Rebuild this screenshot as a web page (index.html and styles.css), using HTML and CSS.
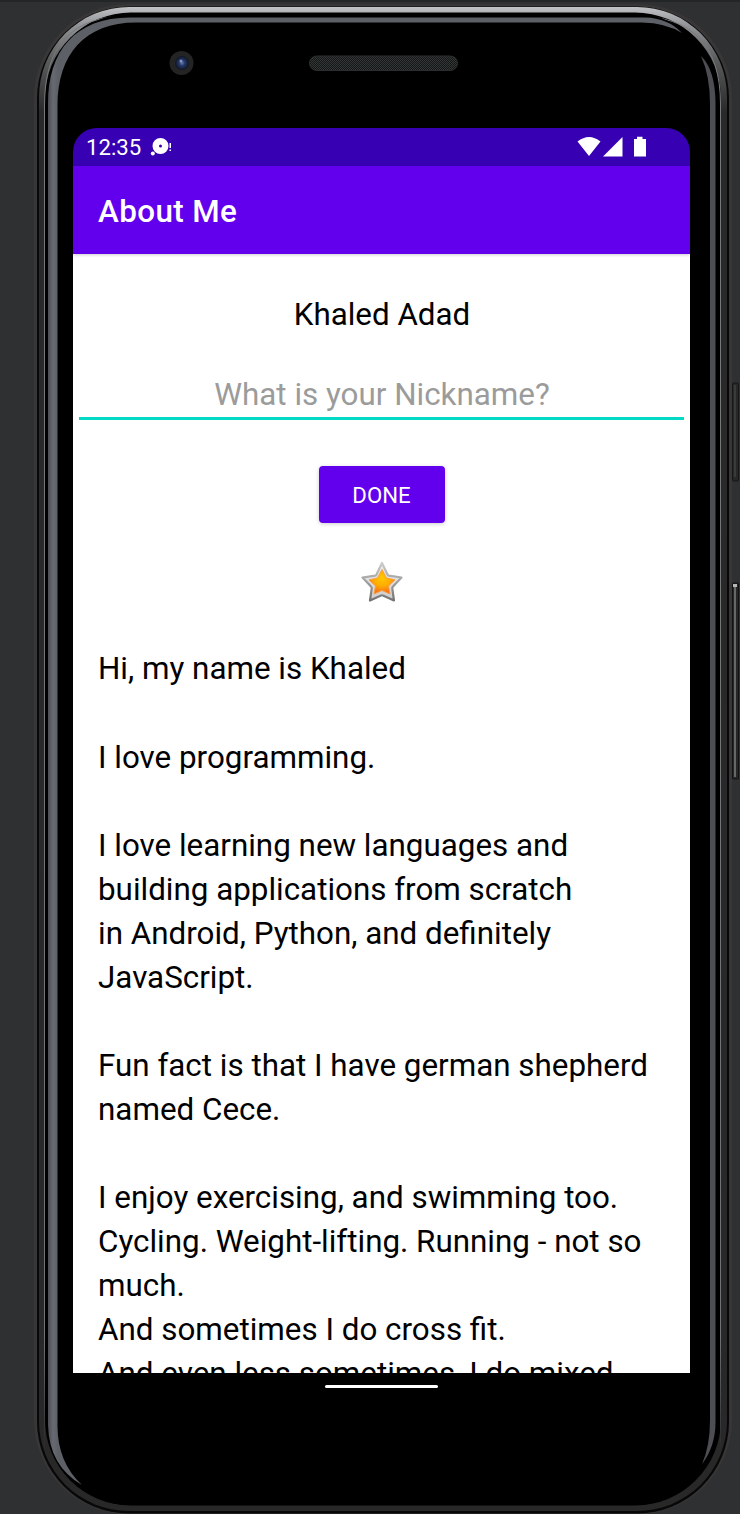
FILE: index.html
```html
<!DOCTYPE html>
<html lang="en">
<head>
<meta charset="utf-8">
<title>About Me</title>
<link rel="stylesheet" href="styles.css">
</head>
<body>
<svg class="frame" viewBox="0 0 740 1514" width="740" height="1514" aria-hidden="true">
  <defs>
    <linearGradient id="rim" x1="0" y1="0" x2="0" y2="1">
      <stop offset="0" stop-color="#c0c2c5"/><stop offset=".012" stop-color="#929497"/><stop offset=".035" stop-color="#5b5c5d"/><stop offset=".07" stop-color="#292929"/><stop offset="1" stop-color="#282829"/>
    </linearGradient>
    <linearGradient id="glass" gradientUnits="userSpaceOnUse" x1="48" y1="0" x2="58" y2="0">
      <stop offset="0" stop-color="#4b4c54"/><stop offset=".5" stop-color="#686a73"/><stop offset="1" stop-color="#5e6067"/>
    </linearGradient>
    <linearGradient id="line" x1="0" y1="0" x2="0" y2="1"><stop offset="0" stop-color="#77797b"/><stop offset=".92" stop-color="#707274"/><stop offset="1" stop-color="#282829"/></linearGradient>
    <radialGradient id="lens"><stop offset="0" stop-color="#637bae"/><stop offset=".4" stop-color="#26386a"/><stop offset="1" stop-color="#101522"/></radialGradient>
    <pattern id="mesh" width="2" height="2" patternUnits="userSpaceOnUse"><path fill="#151616" d="M0 0h2v2H0z"/><path fill="#343737" d="M0 0h1v1H0zM1 1h1v1H1z"/></pattern>
  </defs>
  <path fill="#242526" d="M0 0h740v2H0z"/>
  <rect x="34" y="4" width="698" height="1510" rx="94" fill="#383636"/>
  <rect x="37" y="6.500" width="692" height="1507" rx="92" fill="#080808"/>
  <rect x="39" y="7" width="688" height="1504" rx="90" fill="url(#rim)"/>
  <rect x="45" y="12.500" width="676" height="1493" rx="86" fill="#000"/>
  <path d="M44.500 1450V105Q44.500 16 128 16H635Q720.500 16 720.500 104V1450" fill="none" stroke="url(#line)" stroke-width="1"/>
  <rect x="46" y="14" width="673" height="1491" rx="84" fill="#000"/>
  <path fill="url(#glass)" d="M48 1425V104C48 51 75 17.500 130 17.500H645Q668 18 682 33Q666 23 642 22.500H136C85 22.500 57.500 54 57.500 106V1424Q57 1462 82 1485Q49 1466 48 1425Z"/>
  <path fill="#4d4e54" d="M701 56Q715.500 70 715.500 104V1420Q716 1446 702 1464Q710 1446 710 1420V104Q710 76 701 56Z"/>
  <circle cx="181.500" cy="63" r="12" fill="#242424"/>
  <circle cx="182" cy="63" r="7" fill="url(#lens)"/>
  <circle cx="181" cy="61" r="1.500" fill="#8195bd"/>
  <rect x="309.500" y="56" width="148" height="14.500" rx="7.250" fill="url(#mesh)" stroke="#2c2e2e"/>
  <rect x="732.500" y="383" width="6" height="98" rx="1" fill="#262727" stroke="#171717"/>
  <path fill="#393a3a" d="M734 385h2v92h-2z"/>
  <rect x="732.500" y="583" width="6" height="196" rx="1" fill="#262727" stroke="#121212"/>
  <path fill="#666868" d="M734 584h2v193h-2z"/><path fill="#b5b7b7" d="M733 584h4v3h-4z"/>
</svg>
<main class="device">
  <section class="screen">
    <div class="status">
      <span class="clock">12:35</span>
      <svg class="notice" viewBox="0 0 22 20" width="22" height="20"><path fill="#fff" fill-rule="evenodd" d="M10.500 1a8 8 0 1 1 0 16a8 8 0 0 1 0-16zM10.500 7.500a1.500 1.500 0 1 0 0 3a1.500 1.500 0 0 0 0-3z"/><circle cx="2.800" cy="16.500" r="2" fill="#fff"/><path fill="#fff" d="M19.500 6h1.500v5h-1.500zM19.500 12.500h1.500V14h-1.500z"/></svg>
      <svg class="signals" viewBox="0 0 70 22" width="70" height="22"><path fill="#fff" d="M.5 5.500Q12-3.500 23.500 5.500L12 20zM26 20.500L45.500 1v19.500zM57 3h3V.8h5.500V3h3.500v17.500H57z"/></svg>
    </div>
    <header class="bar">About Me</header>
    <div class="content">
      <h1 class="name">Khaled Adad</h1>
      <div class="field">What is your Nickname?</div>
      <button class="done">DONE</button>
      <svg class="star" viewBox="0 0 46 46" width="46" height="46">
        <defs><linearGradient id="silver" x1="0" y1="0" x2="0" y2="1"><stop offset="0" stop-color="#f0f0f0"/><stop offset="1" stop-color="#ccc"/></linearGradient><linearGradient id="edge" x1="0" y1="0" x2="0" y2="1"><stop offset="0" stop-color="#ccc"/><stop offset="1" stop-color="#737373"/></linearGradient><radialGradient id="gold" cx=".5" cy=".35" r=".65"><stop offset="0" stop-color="#ffc800"/><stop offset=".5" stop-color="#ffac00"/><stop offset="1" stop-color="#fa661c"/></radialGradient></defs>
        <path d="M23 4L28.500 15.500Q29 16.500 30 16.700L42.500 18.500L34 27.500Q33 28.500 33.300 29.500L35 41.500L24 36.500Q23 36 22 36.500L11 41.500L12.700 29.500Q13 28.500 12 27.500L3.500 18.500L16 16.700Q17 16.500 17.500 15.500Z" fill="url(#silver)" stroke="url(#edge)" stroke-width="2.200" stroke-linejoin="round"/>
        <path d="M23 10.500L27.500 19L36 20.800L29.500 27L31 35L23 31.500L15 35L16.500 27L10 20.800L18.500 19Z" fill="url(#gold)" stroke="#f7a044" stroke-width="1" stroke-linejoin="round"/>
      </svg>
      <div class="bio">Hi, my name is Khaled

I love programming.

I love learning new languages and
building applications from scratch
in Android, Python, and definitely
JavaScript.

Fun fact is that I have german shepherd
named Cece.

I enjoy exercising, and swimming too.
Cycling. Weight-lifting. Running - not so
much.
And sometimes I do cross fit.
And even less sometimes, I do mixed</div>
    </div>
  </section>
  <div class="handle"></div>
</main>
</body>
</html>
```
FILE: styles.css
```css
* { box-sizing: border-box; }
body { margin: 0; background: #2f3032; font-family: Roboto, sans-serif; font-size: 31.36px; color: #000; }
.frame { position: absolute; top: 0; left: 0; z-index: -1; }
.device { width: 740px; height: 1514px; padding: 128px 50px 0 73px; overflow: hidden; }
.screen { height: 1245px; overflow: hidden; border-radius: 24px 24px 0 0; }
.status { display: flex; align-items: center; height: 38px; padding: 0 43px 0 13px; background: #3700b3; color: #fff; }
.clock { font-size: 22.200px; line-height: 38px; }
.notice { margin-left: 9px; }
.signals { margin-left: auto; }
.bar { height: 88px; padding: 2px 25px 0; line-height: 88px; background: #6200ee; color: #fff; font-weight: 500; letter-spacing: .4px; box-shadow: 0 1px 3px #0003; position: relative; }
.content { display: flex; flex-direction: column; align-items: center; height: 1119px; background: #fff; }
.content > * { flex: none; }
.name { margin: 39px 0 0; padding-left: 1px; font-size: 31.34px; line-height: 44px; font-weight: 400; }
.field { width: 605px; height: 60px; margin-top: 23px; padding: 13px 0 0 1px; line-height: 44px; text-align: center; color: #9b9b9b; border-bottom: 3px solid #03dac5; }
.done { width: 126px; height: 57px; margin-top: 46px; padding: 1px 0 0; border: 0; border-radius: 4px; background: #6200ee; color: #fff; font: 400 22.2px Roboto, sans-serif; box-shadow: 0 1px 4px #0003; }
.star { margin-top: 36px; }
.bio { width: 100%; margin-top: 42.400px; padding-left: 25px; line-height: 44.060px; white-space: pre; }
.handle { width: 113px; height: 3px; margin: 12px auto 0; border-radius: 2px; background: #fff; }
```
